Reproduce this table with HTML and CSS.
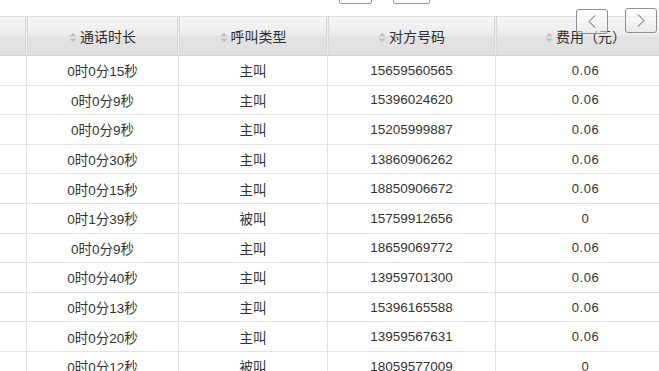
FILE: index.html
```html
<!DOCTYPE html>
<html lang="zh">
<head>
<meta charset="utf-8">
<title>通话记录</title>
<link rel="stylesheet" href="styles.css">
</head>
<body>
<div class="page">
  <div class="toolbar">
    <span class="tool-box box-a"></span>
    <span class="tool-box box-b"></span>
  </div>
  <div class="grid-wrap">
    <table class="grid">
      <colgroup>
        <col class="c1"><col class="c2"><col class="c3"><col class="c4"><col class="c5">
      </colgroup>
      <thead>
        <tr>
          <th></th>
          <th><svg class="sort" viewBox="0 0 8 11" width="8" height="11"><path d="M4 0.5 L7.5 4.5 L0.5 4.5 Z M4 10.5 L7.5 6.5 L0.5 6.5 Z"/></svg>通话时长</th>
          <th><svg class="sort" viewBox="0 0 8 11" width="8" height="11"><path d="M4 0.5 L7.5 4.5 L0.5 4.5 Z M4 10.5 L7.5 6.5 L0.5 6.5 Z"/></svg>呼叫类型</th>
          <th><svg class="sort" viewBox="0 0 8 11" width="8" height="11"><path d="M4 0.5 L7.5 4.5 L0.5 4.5 Z M4 10.5 L7.5 6.5 L0.5 6.5 Z"/></svg>对方号码</th>
          <th><svg class="sort" viewBox="0 0 8 11" width="8" height="11"><path d="M4 0.5 L7.5 4.5 L0.5 4.5 Z M4 10.5 L7.5 6.5 L0.5 6.5 Z"/></svg>费用（元）</th>
        </tr>
      </thead>
      <tbody>
        <tr><td></td><td>0时0分15秒</td><td>主叫</td><td>15659560565</td><td class="fee">0.06</td></tr>
        <tr><td></td><td>0时0分9秒</td><td>主叫</td><td>15396024620</td><td class="fee">0.06</td></tr>
        <tr><td></td><td>0时0分9秒</td><td>主叫</td><td>15205999887</td><td class="fee">0.06</td></tr>
        <tr><td></td><td>0时0分30秒</td><td>主叫</td><td>13860906262</td><td class="fee">0.06</td></tr>
        <tr><td></td><td>0时0分15秒</td><td>主叫</td><td>18850906672</td><td class="fee">0.06</td></tr>
        <tr><td></td><td>0时1分39秒</td><td>被叫</td><td>15759912656</td><td class="fee">0</td></tr>
        <tr><td></td><td>0时0分9秒</td><td>主叫</td><td>18659069772</td><td class="fee">0.06</td></tr>
        <tr><td></td><td>0时0分40秒</td><td>主叫</td><td>13959701300</td><td class="fee">0.06</td></tr>
        <tr><td></td><td>0时0分13秒</td><td>主叫</td><td>15396165588</td><td class="fee">0.06</td></tr>
        <tr><td></td><td>0时0分20秒</td><td>主叫</td><td>13959567631</td><td class="fee">0.06</td></tr>
        <tr><td></td><td>0时0分12秒</td><td>被叫</td><td>18059577009</td><td class="fee">0</td></tr>
      </tbody>
    </table>
  </div>
  <button class="nav nav-prev" type="button" aria-label="上一页"><svg viewBox="0 0 8 13" width="8" height="13"><polyline points="7,0.5 1,6.5 7,12.5"/></svg></button>
  <button class="nav nav-next" type="button" aria-label="下一页"><svg viewBox="0 0 8 13" width="8" height="13"><polyline points="1,0.5 7,6.5 1,12.5"/></svg></button>
</div>
</body>
</html>
```

FILE: styles.css
```css
html, body {
  margin: 0;
  padding: 0;
  background: #ffffff;
}

body {
  font-family: "Liberation Sans", "Noto Sans CJK SC", sans-serif;
  color: #333333;
  overflow: hidden;
}

.page {
  position: relative;
  width: 659px;
  height: 371px;
  overflow: hidden;
}

.toolbar {
  display: flex;
  align-items: flex-end;
  height: 4px;
  overflow: hidden;
  padding-left: 339px;
  gap: 21px;
}

.tool-box {
  display: block;
  flex: none;
  height: 20px;
  border: 1px solid #9a9a9a;
  border-radius: 2px;
  box-sizing: border-box;
  background: #fafafa;
}

.box-a { width: 33px; }
.box-b { width: 37px; }

.grid-wrap {
  margin-top: 12px;
  overflow: hidden;
}

.grid {
  table-layout: fixed;
  width: 749px;
  margin-left: -73px;
  border-collapse: separate;
  border-spacing: 0;
}

.c1 { width: 100px; }
.c2 { width: 152px; }
.c3 { width: 149px; }
.c4 { width: 168px; }
.c5 { width: 180px; }

.grid th {
  height: 38px;
  padding: 0;
  box-sizing: content-box;
  font-weight: normal;
  font-size: 14px;
  color: #2e2e2e;
  text-align: center;
  white-space: nowrap;
  background: linear-gradient(#f5f5f5 0%, #ececec 45%, #e2e2e2 55%, #e0e0e0 100%);
  border-top: 1px solid #dedede;
  border-bottom: 1px solid #d2d2d2;
  border-right: 1px solid #ededed;
  box-shadow: inset -1px 0 0 #d8d8d8, inset 1px 0 0 #d8d8d8;
}

.sort {
  display: inline-block;
  vertical-align: -1px;
  margin-right: 3px;
  fill: #c2c2c2;
}

.grid td {
  height: 28.6px;
  padding: 0;
  box-sizing: content-box;
  font-size: 13.5px;
  color: #333333;
  text-align: center;
  white-space: nowrap;
  border-right: 1px solid #e2e2e2;
  border-bottom: 1px solid #e2e2e2;
  background: #ffffff;
}

.grid td.fee {
  font-size: 13px;
  letter-spacing: 0.6px;
}

.nav {
  position: absolute;
  width: 32px;
  height: 25px;
  padding: 0;
  margin: 0;
  border: 1px solid #8e8e8e;
  border-radius: 3px;
  background: linear-gradient(rgba(255,255,255,0.75), rgba(232,232,232,0.55));
  display: flex;
  align-items: center;
  justify-content: center;
  box-sizing: border-box;
}

.nav svg {
  fill: none;
  stroke: #555555;
  stroke-width: 1;
}

.nav-prev {
  left: 576px;
  top: 9px;
}

.nav-next {
  left: 625px;
  top: 8px;
}
```
